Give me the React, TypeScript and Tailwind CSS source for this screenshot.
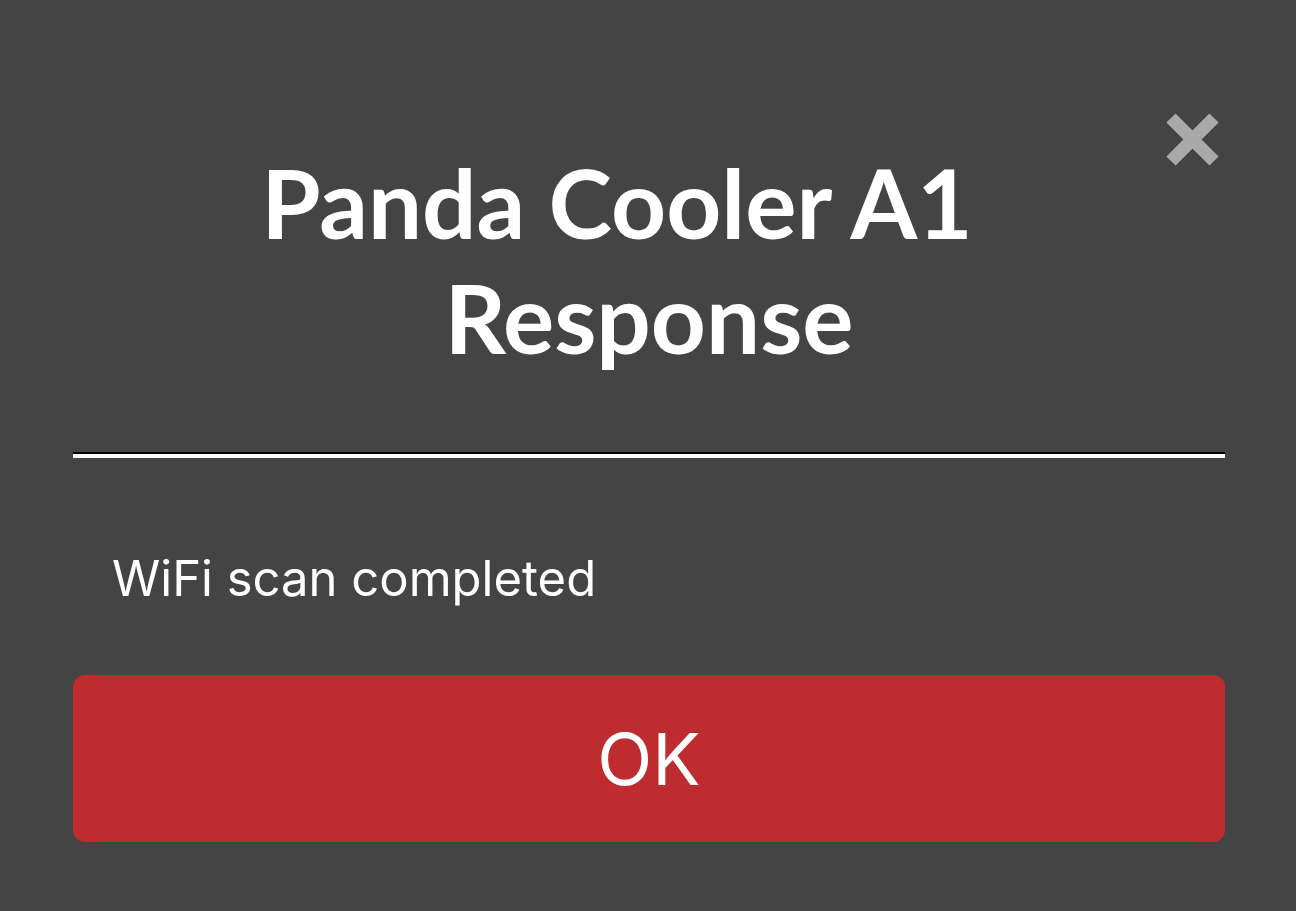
import { useState } from "react";

// Response dialog shown after a device command finishes
export default function App() {
  const [open, setOpen] = useState(true);

  return (
    <div className="w-full h-[911px] bg-[#444444] overflow-hidden font-['Inter',sans-serif] text-white">
      {open && (
        <div className="relative flex flex-col pl-[73px] pr-[71px]">
          <button
            onClick={() => setOpen(false)}
            className="absolute top-[113px] right-[77px] w-[53px] h-[53px]"
            aria-label="Close"
          >
            <svg viewBox="0 0 53 53" width="53" height="53">
              <path d="M5 5 L48 48 M48 5 L5 48" stroke="#a9a9a9" strokeWidth="13" strokeLinecap="butt" />
            </svg>
          </button>

          <h1 className="pt-[144px] text-center text-[96px] leading-[115px] font-bold font-['Lato',sans-serif]">
            <span className="block pr-[64px]">Panda Cooler A1</span>
            <span className="block">Response</span>
          </h1>

          <div className="mt-[78px] h-[6px] border-t-2 border-black bg-white" />

          <p className="mt-[91px] pl-[39px] text-[49px] leading-[60px]">WiFi scan completed</p>

          <button className="mt-[66px] h-[167px] w-full rounded-[12px] bg-[#bf2c2f] text-[72px] flex items-center justify-center">
            OK
          </button>
        </div>
      )}
    </div>
  );
}
